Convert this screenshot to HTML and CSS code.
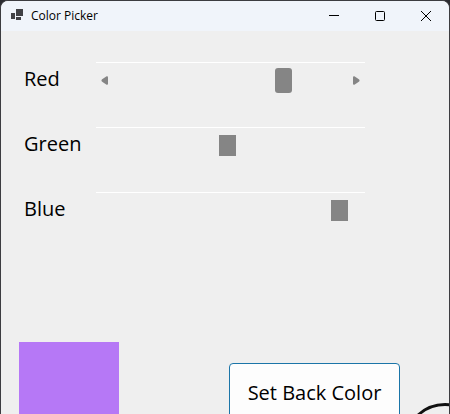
FILE: index.html
```
<!DOCTYPE html>
<html lang="en">
  <head>
    <meta charset="UTF-8" />
    <meta name="viewport" content="width=device-width, initial-scale=1.0" />
    <title>Color Picker</title>
    <link rel="stylesheet" href="styles.css">
  </head>
  <body>
    <div class="window">
      <header class="titlebar">
        <svg class="app-icon" width="12" height="12" viewBox="0 0 12 12" fill="#404044">
          <rect x="5" y="0" width="7" height="7" />
          <rect x="0" y="4" width="4" height="6" />
          <rect x="5" y="8" width="5" height="3" />
        </svg>
        <h1>Color Picker</h1>
        <div class="window-buttons">
          <button type="button" aria-label="Minimize">
            <svg width="12" height="12" viewBox="0 0 12 12"><path d="M1 5.5h10" /></svg>
          </button>
          <button type="button" aria-label="Maximize">
            <svg width="12" height="12" viewBox="0 0 12 12"><rect x="1.5" y="1.5" width="9" height="9" rx="1" /></svg>
          </button>
          <button type="button" aria-label="Close">
            <svg width="12" height="12" viewBox="0 0 12 12"><path d="M1 1l10 10M11 1L1 11" /></svg>
          </button>
        </div>
      </header>

      <main class="form">
        <div class="channels">
          <div class="channel active">
            <label for="red">Red</label>
            <div class="scrollbar">
              <button type="button" class="arrow" aria-label="Less red">
                <svg width="7" height="9" viewBox="0 0 7 9"><path d="M5.6.3Q7 0 7 1.2V7.8Q7 9 5.6 8.7L.8 5.4Q0 4.5.8 3.6z" /></svg>
              </button>
              <input type="range" id="red" min="0" max="246" value="183" />
              <button type="button" class="arrow" aria-label="More red">
                <svg width="7" height="9" viewBox="0 0 7 9"><path d="M1.4.3Q0 0 0 1.2V7.8Q0 9 1.4 8.7L6.2 5.4Q7 4.5 6.2 3.6z" /></svg>
              </button>
            </div>
          </div>
          <div class="channel">
            <label for="green">Green</label>
            <div class="scrollbar">
              <input type="range" id="green" min="0" max="246" value="120" />
            </div>
          </div>
          <div class="channel">
            <label for="blue">Blue</label>
            <div class="scrollbar">
              <input type="range" id="blue" min="0" max="246" value="246" />
            </div>
          </div>
        </div>

        <div class="result">
          <div class="preview" id="preview"></div>
          <button type="button" class="apply" id="apply">Set Back Color</button>
          <svg class="ring" width="82" height="82" viewBox="0 0 82 82">
            <circle cx="41" cy="41" r="39.5" fill="none" stroke="#111" stroke-width="3" />
          </svg>
        </div>
      </main>
    </div>

    <script src="script.js"></script>
  </body>
</html>
```
FILE: styles.css
```
* {
  box-sizing: border-box;
}

body {
  margin: 0;
  background: #2b2b30;
  color: #000;
  font-family: "Open Sans", "Noto Sans", sans-serif;
}

button {
  font-family: inherit;
  color: inherit;
}

.window {
  display: flex;
  flex-direction: column;
  height: 100vh;
  border: 1px solid #3c3c40;
  border-bottom: none;
  border-radius: 8px 8px 0 0;
  background: #efefef;
  overflow: hidden;
}

.titlebar {
  display: flex;
  flex: none;
  align-items: center;
  height: 30px;
  padding-left: 10px;
  background: #f0f4fa;
}

.titlebar h1 {
  margin: 0 0 0 8px;
  font-size: 12px;
  font-weight: normal;
  line-height: 28px;
}

.app-icon {
  margin-bottom: 2px;
}

.window-buttons {
  display: flex;
  margin-left: auto;
}

.window-buttons button {
  display: flex;
  align-items: center;
  justify-content: center;
  width: 46px;
  height: 28px;
  padding: 0;
  border: none;
  background: none;
}

.window-buttons svg {
  fill: none;
  stroke: #000;
}

.form {
  flex: 1;
  min-height: 0;
  overflow: hidden;
}

.channels {
  display: grid;
  gap: 30px;
  padding: 31px 84px 0 23px;
}

.channel {
  display: grid;
  grid-template-columns: 72px 1fr;
  height: 35px;
}

.channel label {
  font-size: 20px;
  line-height: 34px;
}

.scrollbar {
  display: grid;
  grid-template-columns: 17px 1fr 17px;
  align-items: center;
  border-top: 1px solid #fff;
}

.arrow {
  display: flex;
  align-items: center;
  justify-content: center;
  height: 17px;
  padding: 0;
  border: none;
  background: none;
}

.arrow svg {
  fill: #858585;
}

.scrollbar input {
  grid-column: 2;
  width: 100%;
  height: 25px;
  margin: 0;
  background: none;
  -webkit-appearance: none;
  appearance: none;
}

.scrollbar input::-webkit-slider-thumb {
  -webkit-appearance: none;
  width: 17px;
  height: 21px;
  background: #858585;
}

.active input::-webkit-slider-thumb {
  height: 25px;
  border-radius: 3px;
}

.result {
  display: flex;
  align-items: flex-start;
  padding-left: 18px;
  margin-top: 115px;
}

.preview {
  width: 100px;
  height: 100px;
  background: #b678f6;
}

.apply {
  width: 171px;
  height: 58px;
  margin: 21px 0 0 auto;
  padding: 0;
  border: 1px solid #1b75a8;
  border-radius: 4px;
  background: #fdfdfd;
  font-size: 20px;
}

/* runs off the right edge of the window */
.ring {
  flex: none;
  margin: 61px -37px 0 4px;
}
```
FILE: script.js
```
const red = document.getElementById("red");
const green = document.getElementById("green");
const blue = document.getElementById("blue");
const preview = document.getElementById("preview");
const form = document.querySelector(".form");

function currentColor() {
  return `rgb(${red.value}, ${green.value}, ${blue.value})`;
}

[red, green, blue].forEach((bar) => {
  bar.addEventListener("input", () => {
    preview.style.background = currentColor();
  });
});

document.getElementById("apply").addEventListener("click", () => {
  form.style.background = currentColor();
});
```
